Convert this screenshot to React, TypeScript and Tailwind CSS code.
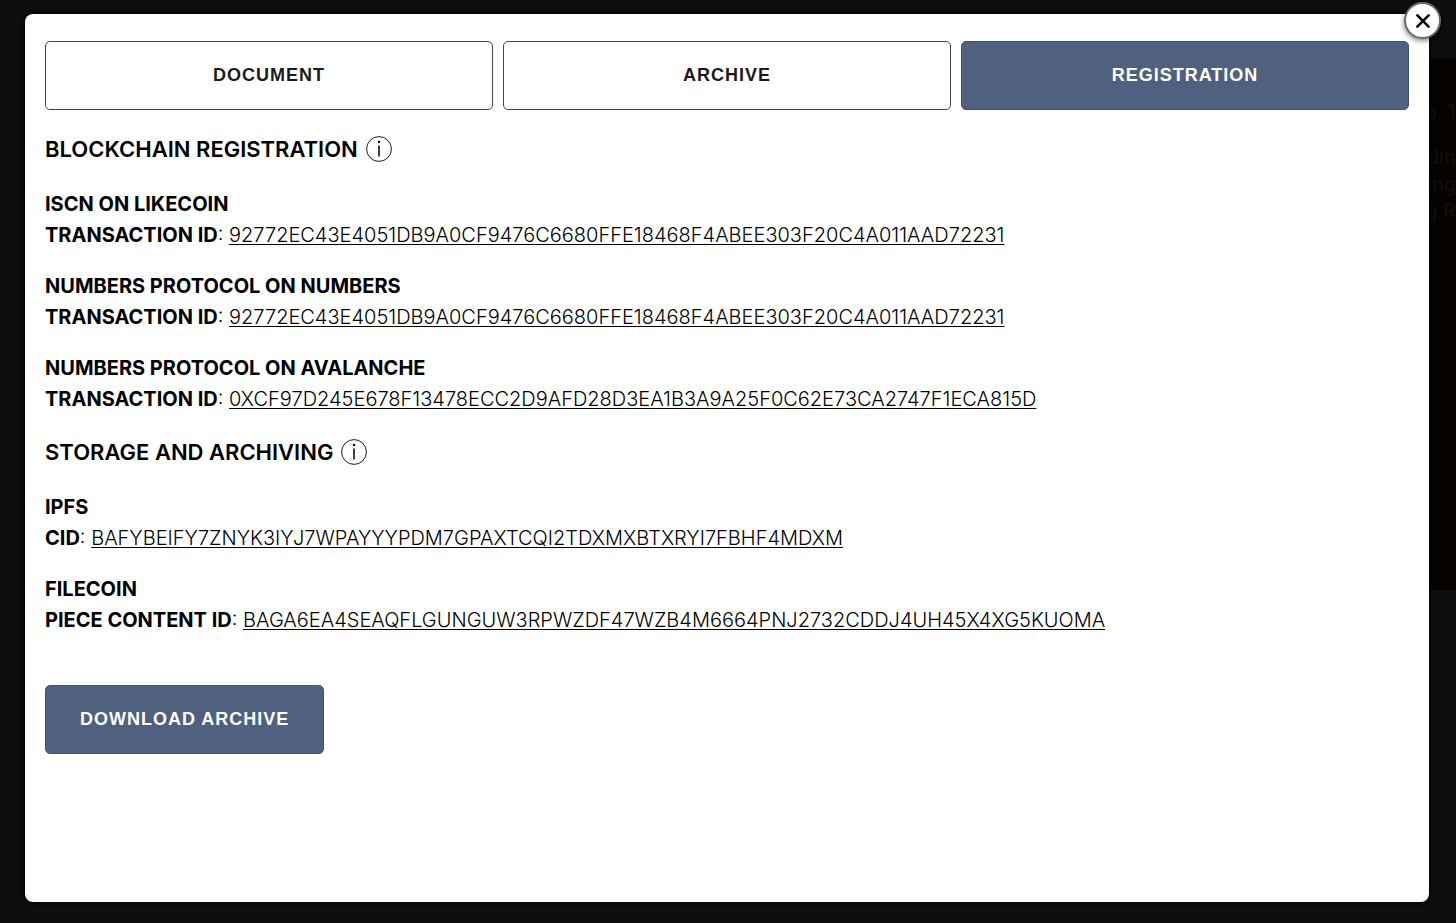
import { useState } from 'react';
import clsx from 'clsx';

type Entry = { title: string; label: string; value: string };

const TABS = ['Document', 'Archive', 'Registration'];

const REGISTRATIONS: Entry[] = [
	{
		title: 'ISCN on LikeCoin',
		label: 'Transaction ID',
		value: '92772EC43E4051DB9A0CF9476C6680FFE18468F4ABEE303F20C4A011AAD72231',
	},
	{
		title: 'Numbers Protocol on Numbers',
		label: 'Transaction ID',
		value: '92772EC43E4051DB9A0CF9476C6680FFE18468F4ABEE303F20C4A011AAD72231',
	},
	{
		title: 'Numbers Protocol on Avalanche',
		label: 'Transaction ID',
		value: '0XCF97D245E678F13478ECC2D9AFD28D3EA1B3A9A25F0C62E73CA2747F1ECA815D',
	},
];

const STORAGE: Entry[] = [
	{
		title: 'IPFS',
		label: 'CID',
		value: 'BAFYBEIFY7ZNYK3IYJ7WPAYYYPDM7GPAXTCQI2TDXMXBTXRYI7FBHF4MDXM',
	},
	{
		title: 'Filecoin',
		label: 'Piece Content ID',
		value: 'BAGA6EA4SEAQFLGUNGUW3RPWZDF47WZB4M6664PNJ2732CDDJ4UH45X4XG5KUOMA',
	},
];

function InfoIcon() {
	return (
		<svg viewBox="0 0 26 26" className="size-[26px]" fill="none" stroke="currentColor" aria-hidden="true">
			<circle cx="13" cy="13" r="12.4" strokeWidth="0.9" />
			<path d="M13 9.6v10.8" strokeWidth="1.5" />
			<circle cx="13" cy="5.9" r="1.2" fill="currentColor" stroke="none" />
		</svg>
	);
}

function Section({ title, entries }: { title: string; entries: Entry[] }) {
	return (
		<section>
			<div className="flex items-center gap-2 mb-6">
				<h2 className="text-[22px] leading-8 font-semibold uppercase">{title}</h2>
				<button type="button" aria-label={`About ${title}`} className="cursor-pointer">
					<InfoIcon />
				</button>
			</div>
			<div className="flex flex-col gap-5">
				{entries.map(entry => (
					<div key={entry.title} className="text-[20px] leading-[31px]">
						<h3 className="font-bold uppercase">{entry.title}</h3>
						<p className="font-light break-words">
							<span className="font-bold uppercase">{entry.label}</span>:{' '}
							<a href="#" className="underline decoration-1 underline-offset-2">
								{entry.value}
							</a>
						</p>
					</div>
				))}
			</div>
		</section>
	);
}

export default function App() {
	const [active, setActive] = useState('Registration');

	return (
		<div className="relative min-h-screen flex flex-col overflow-hidden bg-[#0d0d0d] pt-3.5 pb-[21px] pl-[25px] pr-[27px] font-['Inter',sans-serif] text-black">
			{/* Dimmed page behind the dialog */}
			<div
				aria-hidden="true"
				className="absolute right-0 top-[59px] h-[531px] w-10 bg-[#060200] pt-10 text-right text-[20px] leading-[27px] whitespace-nowrap text-[#110f0e]"
			>
				<p className="mb-[18px]">o. 1</p>
				<p>din</p>
				<p>ing</p>
				<p>g R</p>
			</div>

			<div
				role="dialog"
				aria-label="Registration details"
				className="relative flex-1 rounded-lg bg-white px-5 pt-[27px] pb-10 shadow-[0_0_3px_1px_#000]"
			>
				<button
					type="button"
					aria-label="Close"
					className="absolute -top-3 -right-3 flex size-[37px] items-center justify-center rounded-full border-2 border-[#6b6b6b] bg-white shadow-[0_2px_5px_rgba(0,0,0,0.5)] cursor-pointer"
				>
					<svg viewBox="0 0 14 14" className="size-3.5" stroke="currentColor" strokeWidth="2.6" strokeLinecap="round" aria-hidden="true">
						<path d="M1.4 1.4l11.2 11.2M12.6 1.4L1.4 12.6" />
					</svg>
				</button>

				<div role="tablist" className="grid grid-cols-3 gap-2.5">
					{TABS.map(tab => (
						<button
							key={tab}
							type="button"
							role="tab"
							aria-selected={active === tab}
							onClick={() => setActive(tab)}
							className={clsx(
								"h-[69px] rounded-[5px] border font-['Liberation_Sans',sans-serif] text-[18px] font-bold tracking-[1px] uppercase cursor-pointer",
								active === tab
									? 'border-[#39537c] bg-[#4f617f] text-white'
									: 'border-[#444] bg-white text-[#1a1a1a]'
							)}
						>
							{tab}
						</button>
					))}
				</div>

				<div className="mt-[23px] flex flex-col gap-[21px]">
					<Section title="Blockchain Registration" entries={REGISTRATIONS} />
					<Section title="Storage and Archiving" entries={STORAGE} />
				</div>

				<button
					type="button"
					className="mt-[49px] h-[69px] rounded-[5px] border border-[#39537c] bg-[#4f617f] px-[34px] font-['Liberation_Sans',sans-serif] text-[18px] font-bold tracking-[1px] text-white uppercase cursor-pointer"
				>
					Download Archive
				</button>
			</div>
		</div>
	);
}
